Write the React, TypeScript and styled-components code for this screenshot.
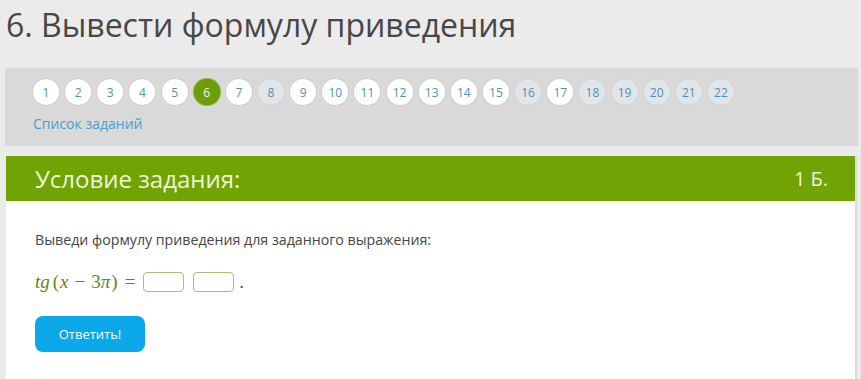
import React from "react";
import styled, { createGlobalStyle } from "styled-components";

const GlobalStyle = createGlobalStyle`
  body {
    margin: 0;
    background: #ebebeb;
    font-family: "Open Sans", "Liberation Sans", sans-serif;
  }
`;

const Page = styled.div`
  width: 861px;
  height: 379px;
  overflow: hidden;
  padding: 0 4px 0 6px;
  box-sizing: border-box;
`;

const Title = styled.h1`
  margin: 0;
  padding: 2px 0 0 0;
  height: 66px;
  font-size: 32px;
  font-weight: 400;
  line-height: 46px;
  color: #474747;
`;

const NavPanel = styled.div`
  background: #d9d9d9;
  margin: 0 -1px 0 -1px;
  padding: 11px 0 0 28px;
  height: 78px;
  box-sizing: border-box;
`;

const Steps = styled.div`
  display: flex;
  gap: 6.15px;
`;

const Step = styled.span<{ $state: "done" | "active" | "open" }>`
  width: 26px;
  height: 26px;
  border-radius: 50%;
  display: flex;
  align-items: center;
  justify-content: center;
  font-size: 12px;
  color: ${(p) => (p.$state === "active" ? "#f3f8e6" : "#4b8fbd")};
  background: ${(p) =>
    p.$state === "active" ? "#6c9e0a" : p.$state === "done" ? "#ffffff" : "#e3e6e8"};
  box-shadow: 0 0 0 1px
    ${(p) => (p.$state === "active" ? "#8ab43a" : "rgba(0, 0, 0, 0.04)")};
`;

const TaskListLink = styled.a`
  display: block;
  margin-top: 9px;
  font-size: 14px;
  color: #4a9bd0;
  text-decoration: none;
`;

const Card = styled.section`
  margin-top: 10px;
  background: #fff;
  border-right: 2px solid #dcdcdc;
`;

const CardHeader = styled.div`
  background: #70a303;
  height: 45px;
  display: flex;
  align-items: center;
  justify-content: space-between;
  padding: 0 27px 0 29px;
  color: #eef6d9;
`;

const CardTitle = styled.h2`
  margin: 0;
  font-size: 24px;
  font-weight: 400;
`;

const Points = styled.span`
  font-size: 20px;
`;

const CardBody = styled.div`
  padding: 29px 29px 40px;
  display: flex;
  flex-direction: column;
  align-items: flex-start;
`;

const Question = styled.p`
  margin: 0;
  font-size: 14.2px;
  color: #454545;
  line-height: 20px;
`;

const Formula = styled.div`
  margin-top: 21px;
  display: flex;
  align-items: center;
  gap: 9px;
  font-family: "Liberation Serif", "DejaVu Serif", serif;
  font-size: 19px;
  font-style: italic;
  color: #5f8420;
`;

const Expr = styled.span`
  white-space: nowrap;
  margin-right: -1px;
`;

const Upright = styled.span`
  font-style: normal;
`;

const Op = styled.span<{ $before?: number; $after?: number }>`
  font-style: normal;
  margin: 0 ${(p) => p.$after ?? 6}px 0 ${(p) => p.$before ?? 6}px;
`;

const AnswerBox = styled.input`
  width: 41px;
  height: 20px;
  box-sizing: border-box;
  border: 1px solid #a7bd78;
  border-radius: 4px;
  background: #fff;
  outline: none;
`;

const Dot = styled.span`
  font-style: normal;
  color: #555;
  margin-left: -4px;
`;

const SubmitButton = styled.button`
  margin-top: 23px;
  width: 110px;
  height: 36px;
  border: none;
  border-radius: 8px;
  background: #0aa8e9;
  color: #fff;
  font-family: "Open Sans", "Liberation Sans", sans-serif;
  font-size: 13px;
  cursor: pointer;
`;

const done = [1, 2, 3, 4, 5, 7, 9, 10, 11, 12, 13, 14, 15, 17];

export default function App() {
  const steps = Array.from({ length: 22 }, (_, i) => i + 1);
  return (
    <Page>
      <GlobalStyle />
      <Title>6. Вывести формулу приведения</Title>
      <NavPanel>
        <Steps>
          {steps.map((n) => (
            <Step key={n} $state={n === 6 ? "active" : done.includes(n) ? "done" : "open"}>
              {n}
            </Step>
          ))}
        </Steps>
        <TaskListLink href="#">Список заданий</TaskListLink>
      </NavPanel>
      <Card>
        <CardHeader>
          <CardTitle>Условие задания:</CardTitle>
          <Points>1 Б.</Points>
        </CardHeader>
        <CardBody>
          <Question>Выведи формулу приведения для заданного выражения:</Question>
          <Formula>
            <Expr>
              tg<Op $before={3} $after={1}>(</Op>x<Op>−</Op>
              <Upright>3</Upright>π<Op $before={1} $after={0}>)</Op>
              <Op $before={7} $after={0}>=</Op>
            </Expr>
            <AnswerBox />
            <AnswerBox />
            <Dot>.</Dot>
          </Formula>
          <SubmitButton>Ответить!</SubmitButton>
        </CardBody>
      </Card>
    </Page>
  );
}
